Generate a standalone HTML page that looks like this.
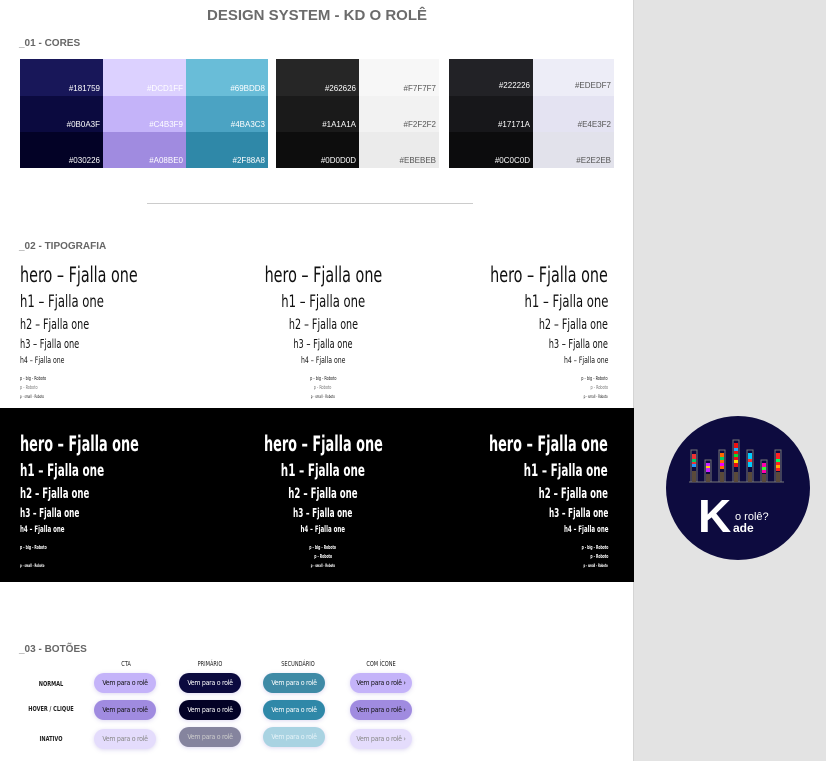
<!DOCTYPE html>
<html><head><meta charset="utf-8"><style>
*{margin:0;padding:0;box-sizing:border-box}
body{width:826px;height:761px;position:relative;background:#e3e3e3;overflow:hidden;font-family:"Liberation Sans",sans-serif}
#page{position:absolute;left:0;top:0;width:634px;height:761px;background:#fff;border-right:1px solid #d4d4d4}
.a{position:absolute}
.title{left:0;width:634px;top:7px;text-align:center;font-weight:bold;font-size:15px;color:#6b6b6b}
.sec{font-size:10px;color:#666;font-weight:bold}
.sw{position:absolute;font-size:8px;text-align:right;padding-right:3px;display:flex;align-items:flex-end;justify-content:flex-end;padding-bottom:3px}
.band{left:0;top:408px;width:634px;height:174px;background:#000}
.t{position:absolute;white-space:nowrap;font-family:"DejaVu Sans Condensed","Liberation Sans",sans-serif;color:#111}
.t span{display:inline-block;transform:scaleX(.76)}
.w span{transform:scaleX(.68)}
.L span{transform-origin:left center}
.C{text-align:center}.C span{transform-origin:center}
.R{text-align:right}.R span{transform-origin:right center}
.w{color:#fff;font-weight:bold}
.btn{position:absolute;width:62px;height:20px;border-radius:10px;font-size:7px;display:flex;align-items:center;justify-content:center;font-family:"DejaVu Sans Condensed",sans-serif;box-shadow:0 1px 4px rgba(120,100,200,.25);letter-spacing:-.3px}
.hd{position:absolute;font-size:7px;color:#222;font-family:"DejaVu Sans Condensed",sans-serif;transform:scaleX(.8);text-align:center;width:80px}
</style></head><body>
<div id="page">
<div class="a title">DESIGN SYSTEM - KD O ROLÊ</div>
<div class="a sec" style="left:19px;top:38px">_01 - CORES</div>

<div class="sw" style="left:20px;top:59px;width:83px;height:37px;background:#181759;color:#fff">#181759</div>
<div class="sw" style="left:103px;top:59px;width:83px;height:37px;background:#dcd1ff;color:#fff">#DCD1FF</div>
<div class="sw" style="left:186px;top:59px;width:82px;height:37px;background:#69bdd8;color:#fff">#69BDD8</div>
<div class="sw" style="left:20px;top:96px;width:83px;height:36px;background:#0b0a3f;color:#fff">#0B0A3F</div>
<div class="sw" style="left:103px;top:96px;width:83px;height:36px;background:#c4b3f9;color:#fff">#C4B3F9</div>
<div class="sw" style="left:186px;top:96px;width:82px;height:36px;background:#4ba3c3;color:#fff">#4BA3C3</div>
<div class="sw" style="left:20px;top:132px;width:83px;height:36px;background:#030226;color:#fff">#030226</div>
<div class="sw" style="left:103px;top:132px;width:83px;height:36px;background:#a08be0;color:#fff">#A08BE0</div>
<div class="sw" style="left:186px;top:132px;width:82px;height:36px;background:#2f88a8;color:#fff">#2F88A8</div>

<div class="sw" style="left:276px;top:59px;width:83px;height:37px;background:#262626;color:#fff">#262626</div>
<div class="sw" style="left:359px;top:59px;width:80px;height:37px;background:#f7f7f7;color:#555">#F7F7F7</div>
<div class="sw" style="left:276px;top:96px;width:83px;height:36px;background:#1a1a1a;color:#fff">#1A1A1A</div>
<div class="sw" style="left:359px;top:96px;width:80px;height:36px;background:#f2f2f2;color:#555">#F2F2F2</div>
<div class="sw" style="left:276px;top:132px;width:83px;height:36px;background:#0d0d0d;color:#fff">#0D0D0D</div>
<div class="sw" style="left:359px;top:132px;width:80px;height:36px;background:#ebebeb;color:#555">#EBEBEB</div>

<div class="sw" style="left:449px;top:59px;width:84px;height:37px;background:#222226;color:#fff;padding-bottom:6px">#222226</div>
<div class="sw" style="left:533px;top:59px;width:81px;height:37px;background:#ededf7;color:#555;padding-bottom:6px">#EDEDF7</div>
<div class="sw" style="left:449px;top:96px;width:84px;height:36px;background:#17171a;color:#fff">#17171A</div>
<div class="sw" style="left:533px;top:96px;width:81px;height:36px;background:#e4e3f2;color:#555">#E4E3F2</div>
<div class="sw" style="left:449px;top:132px;width:84px;height:36px;background:#0c0c0d;color:#fff">#0C0C0D</div>
<div class="sw" style="left:533px;top:132px;width:81px;height:36px;background:#e2e2eb;color:#555">#E2E2EB</div>

<div class="a" style="left:147px;top:203px;width:326px;height:1px;background:#ccc"></div>
<div class="a sec" style="left:19px;top:241px">_02 - TIPOGRAFIA</div>

<div class="t L" style="left:20px;top:263px;font-size:21px"><span>hero – Fjalla one</span></div>
<div class="t L" style="left:20px;top:292px;font-size:17px"><span>h1 – Fjalla one</span></div>
<div class="t L" style="left:20px;top:317px;font-size:14px"><span>h2 – Fjalla one</span></div>
<div class="t L" style="left:20px;top:337px;font-size:12px"><span>h3 – Fjalla one</span></div>
<div class="t L" style="left:20px;top:356px;font-size:9px"><span>h4 – Fjalla one</span></div>
<div class="t L" style="left:20px;top:376px;font-size:5px"><span>p - big - Roboto</span></div>
<div class="t L" style="left:20px;top:385px;font-size:5px;color:#777"><span>p - Roboto</span></div>
<div class="t L" style="left:20px;top:394px;font-size:4px"><span>p - small - Roboto</span></div>

<div class="t C" style="left:0;width:646px;top:263px;font-size:21px"><span>hero – Fjalla one</span></div>
<div class="t C" style="left:0;width:646px;top:292px;font-size:17px"><span>h1 – Fjalla one</span></div>
<div class="t C" style="left:0;width:646px;top:317px;font-size:14px"><span>h2 – Fjalla one</span></div>
<div class="t C" style="left:0;width:646px;top:337px;font-size:12px"><span>h3 – Fjalla one</span></div>
<div class="t C" style="left:0;width:646px;top:356px;font-size:9px"><span>h4 – Fjalla one</span></div>
<div class="t C" style="left:0;width:646px;top:376px;font-size:5px"><span>p - big - Roboto</span></div>
<div class="t C" style="left:0;width:646px;top:385px;font-size:5px;color:#777"><span>p - Roboto</span></div>
<div class="t C" style="left:0;width:646px;top:394px;font-size:4px"><span>p - small - Roboto</span></div>

<div class="t R" style="right:25px;top:263px;font-size:21px"><span>hero – Fjalla one</span></div>
<div class="t R" style="right:25px;top:292px;font-size:17px"><span>h1 – Fjalla one</span></div>
<div class="t R" style="right:25px;top:317px;font-size:14px"><span>h2 – Fjalla one</span></div>
<div class="t R" style="right:25px;top:337px;font-size:12px"><span>h3 – Fjalla one</span></div>
<div class="t R" style="right:25px;top:356px;font-size:9px"><span>h4 – Fjalla one</span></div>
<div class="t R" style="right:25px;top:376px;font-size:5px"><span>p - big - Roboto</span></div>
<div class="t R" style="right:25px;top:385px;font-size:5px;color:#777"><span>p - Roboto</span></div>
<div class="t R" style="right:25px;top:394px;font-size:4px"><span>p - small - Roboto</span></div>

<div class="a band"></div>
<div class="t L w" style="left:20px;top:432px;font-size:21px"><span>hero – Fjalla one</span></div>
<div class="t L w" style="left:20px;top:461px;font-size:17px"><span>h1 – Fjalla one</span></div>
<div class="t L w" style="left:20px;top:486px;font-size:14px"><span>h2 – Fjalla one</span></div>
<div class="t L w" style="left:20px;top:506px;font-size:12px"><span>h3 – Fjalla one</span></div>
<div class="t L w" style="left:20px;top:525px;font-size:9px"><span>h4 – Fjalla one</span></div>
<div class="t L w" style="left:20px;top:545px;font-size:5px"><span>p - big - Roboto</span></div>
<div class="t L w" style="left:20px;top:563px;font-size:4px"><span>p - small - Roboto</span></div>

<div class="t C w" style="left:0;width:646px;top:432px;font-size:21px"><span>hero – Fjalla one</span></div>
<div class="t C w" style="left:0;width:646px;top:461px;font-size:17px"><span>h1 – Fjalla one</span></div>
<div class="t C w" style="left:0;width:646px;top:486px;font-size:14px"><span>h2 – Fjalla one</span></div>
<div class="t C w" style="left:0;width:646px;top:506px;font-size:12px"><span>h3 – Fjalla one</span></div>
<div class="t C w" style="left:0;width:646px;top:525px;font-size:9px"><span>h4 – Fjalla one</span></div>
<div class="t C w" style="left:0;width:646px;top:545px;font-size:5px"><span>p - big - Roboto</span></div>
<div class="t C w" style="left:0;width:646px;top:554px;font-size:5px"><span>p - Roboto</span></div>
<div class="t C w" style="left:0;width:646px;top:563px;font-size:4px"><span>p - small - Roboto</span></div>

<div class="t R w" style="right:25px;top:432px;font-size:21px"><span>hero – Fjalla one</span></div>
<div class="t R w" style="right:25px;top:461px;font-size:17px"><span>h1 – Fjalla one</span></div>
<div class="t R w" style="right:25px;top:486px;font-size:14px"><span>h2 – Fjalla one</span></div>
<div class="t R w" style="right:25px;top:506px;font-size:12px"><span>h3 – Fjalla one</span></div>
<div class="t R w" style="right:25px;top:525px;font-size:9px"><span>h4 – Fjalla one</span></div>
<div class="t R w" style="right:25px;top:545px;font-size:5px"><span>p - big - Roboto</span></div>
<div class="t R w" style="right:25px;top:554px;font-size:5px"><span>p - Roboto</span></div>
<div class="t R w" style="right:25px;top:563px;font-size:4px"><span>p - small - Roboto</span></div>

<div class="a sec" style="left:19px;top:644px">_03 - BOTÕES</div>
<div class="hd" style="left:86px;top:660px">CTA</div>
<div class="hd" style="left:170px;top:660px">PRIMÁRIO</div>
<div class="hd" style="left:258px;top:660px">SECUNDÁRIO</div>
<div class="hd" style="left:341px;top:660px">COM ÍCONE</div>
<div class="hd" style="left:11px;top:680px;font-weight:bold">NORMAL</div>
<div class="hd" style="left:11px;top:705px;font-weight:bold">HOVER / CLIQUE</div>
<div class="hd" style="left:11px;top:735px;font-weight:bold">INATIVO</div>

<div class="btn" style="left:94px;top:673px;background:#c4b3f9;color:#111">Vem para o rolê</div>
<div class="btn" style="left:179px;top:673px;background:#0b0a3f;color:#fff">Vem para o rolê</div>
<div class="btn" style="left:263px;top:673px;background:#3f8aa6;color:#fff">Vem para o rolê</div>
<div class="btn" style="left:350px;top:673px;background:#c4b3f9;color:#111">Vem para o rolê ›</div>

<div class="btn" style="left:94px;top:700px;background:#a08be0;color:#111">Vem para o rolê</div>
<div class="btn" style="left:179px;top:700px;background:#030226;color:#fff">Vem para o rolê</div>
<div class="btn" style="left:263px;top:700px;background:#2f88a8;color:#fff">Vem para o rolê</div>
<div class="btn" style="left:350px;top:700px;background:#a08be0;color:#111">Vem para o rolê ›</div>

<div class="btn" style="left:94px;top:729px;background:#e4dcfc;color:#888">Vem para o rolê</div>
<div class="btn" style="left:179px;top:727px;background:#85849e;color:#ccc">Vem para o rolê</div>
<div class="btn" style="left:263px;top:727px;background:#a9d3e2;color:#e6f3f8">Vem para o rolê</div>
<div class="btn" style="left:350px;top:729px;background:#e4dcfc;color:#888">Vem para o rolê ›</div>
</div>

<svg class="a" style="left:664px;top:415px" width="148" height="148" viewBox="0 0 148 148">
<circle cx="74" cy="73" r="72" fill="#0d0b3f"/>
<g stroke="#777" stroke-width="1" fill="none">
<rect x="27" y="35" width="6" height="32"/><rect x="41" y="45" width="6" height="22"/><rect x="55" y="35" width="6" height="32"/>
<rect x="69" y="25" width="6" height="42"/><rect x="83" y="35" width="6" height="32"/><rect x="97" y="45" width="6" height="22"/><rect x="111" y="35" width="6" height="32"/>
<line x1="25" y1="67" x2="120" y2="67"/>
</g>
<g>
<rect x="28" y="39" width="4" height="12" fill="#e33"/><rect x="28" y="44" width="4" height="3" fill="#0c6"/><rect x="28" y="49" width="4" height="3" fill="#29f"/>
<rect x="42" y="48" width="4" height="9" fill="#c2f"/><rect x="42" y="51" width="4" height="2" fill="#fc0"/>
<rect x="56" y="38" width="4" height="16" fill="#f60"/><rect x="56" y="42" width="4" height="3" fill="#0c6"/><rect x="56" y="48" width="4" height="3" fill="#e0f"/>
<rect x="70" y="28" width="4" height="24" fill="#e11"/><rect x="70" y="33" width="4" height="3" fill="#2af"/><rect x="70" y="39" width="4" height="3" fill="#0d3"/><rect x="70" y="45" width="4" height="3" fill="#fd0"/>
<rect x="84" y="38" width="4" height="14" fill="#0cf"/><rect x="84" y="44" width="4" height="3" fill="#f33"/>
<rect x="98" y="48" width="4" height="10" fill="#f0a"/><rect x="98" y="52" width="4" height="3" fill="#3f3"/>
<rect x="112" y="38" width="4" height="18" fill="#f22"/><rect x="112" y="44" width="4" height="3" fill="#0f6"/><rect x="112" y="50" width="4" height="3" fill="#fa0"/>
<g fill="#5a4a3a"><rect x="28" y="56" width="4" height="11"/><rect x="42" y="59" width="4" height="8"/><rect x="56" y="57" width="4" height="10"/><rect x="70" y="57" width="4" height="10"/><rect x="84" y="57" width="4" height="10"/><rect x="98" y="59" width="4" height="8"/><rect x="112" y="57" width="4" height="10"/></g>
</g>
<text x="34" y="117" fill="#fff" font-family="Liberation Sans,sans-serif" font-weight="bold" font-size="46">K</text>
<text x="71" y="105" fill="#fff" font-family="Liberation Sans,sans-serif" font-size="11">o rolê?</text>
<text x="69" y="117" fill="#fff" font-family="Liberation Sans,sans-serif" font-weight="bold" font-size="12">ade</text>
</svg>
</body></html>
